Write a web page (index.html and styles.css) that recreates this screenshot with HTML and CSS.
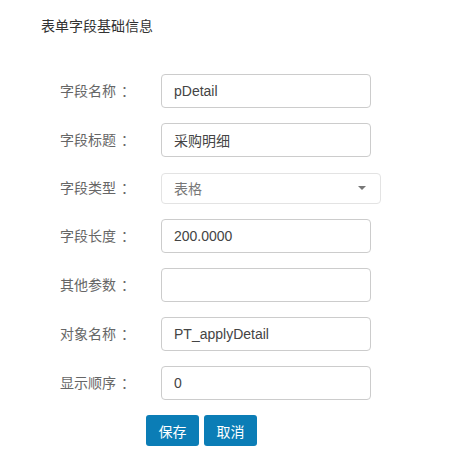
FILE: index.html
```html
<!DOCTYPE html>
<html lang="zh">
<head>
<meta charset="utf-8">
<link rel="stylesheet" href="styles.css">
</head>
<body>
<div class="page">
  <h3 class="title">表单字段基础信息</h3>
  <form class="form">
    <div class="row"><label class="lbl">字段名称<span class="colon">：</span></label><div class="field"><input class="inp" value="pDetail"></div></div>
    <div class="row"><label class="lbl">字段标题<span class="colon">：</span></label><div class="field"><input class="inp" value="采购明细"></div></div>
    <div class="row row-sel"><label class="lbl">字段类型<span class="colon">：</span></label><div class="field"><div class="sel"><span>表格</span><span class="caret"></span></div></div></div>
    <div class="row"><label class="lbl">字段长度<span class="colon">：</span></label><div class="field"><input class="inp" value="200.0000"></div></div>
    <div class="row"><label class="lbl">其他参数<span class="colon">：</span></label><div class="field"><input class="inp" value=""></div></div>
    <div class="row"><label class="lbl">对象名称<span class="colon">：</span></label><div class="field"><input class="inp" value="PT_applyDetail"></div></div>
    <div class="row"><label class="lbl">显示顺序<span class="colon">：</span></label><div class="field"><input class="inp" value="0"></div></div>
    <div class="btns">
      <button type="button" class="btn">保存</button>
      <button type="button" class="btn">取消</button>
    </div>
  </form>
</div>
</body>
</html>
```
FILE: styles.css
```css
* { box-sizing: border-box; }
html, body { margin: 0; padding: 0; background: #fff; }
body {
  font-family: "Liberation Sans", Arial, "Noto Sans CJK SC", sans-serif;
  font-size: 14px;
  color: #333;
}
.page { padding: 16px 0 0 41px; }
.title {
  margin: 0;
  font-size: 14px;
  font-weight: normal;
  line-height: 20px;
  color: #333;
}
.form {
  margin-top: 38px;
  padding-left: 19px;
  display: flex;
  flex-direction: column;
  gap: 15px;
}
.row { display: flex; align-items: center; height: 34px; }
.row-sel { height: 32px; }
.lbl { width: 101px; color: #666; line-height: 20px; }
.colon { padding-left: 5px; }
.field { display: flex; }
.inp {
  width: 210px;
  height: 34px;
  border: 1px solid #ccc;
  border-radius: 4px;
  padding: 0 12px;
  font: inherit;
  font-size: 14px;
  color: #444;
  outline: none;
}
.sel {
  width: 220px;
  height: 31px;
  border: 1px solid #e3e3e3;
  border-radius: 4px;
  padding: 0 14px 0 12px;
  display: flex;
  align-items: center;
  justify-content: space-between;
  color: #777;
}
.caret {
  width: 0; height: 0;
  border-left: 4px solid transparent;
  border-right: 4px solid transparent;
  border-top: 4px solid #777;
}
.btns { display: flex; gap: 5px; padding-left: 86px; }
.btn {
  width: 53px;
  height: 31px;
  border: none;
  border-radius: 3px;
  background: #0b7db6;
  color: #fff;
  font: inherit;
  font-size: 14px;
  padding: 0;
}
```
